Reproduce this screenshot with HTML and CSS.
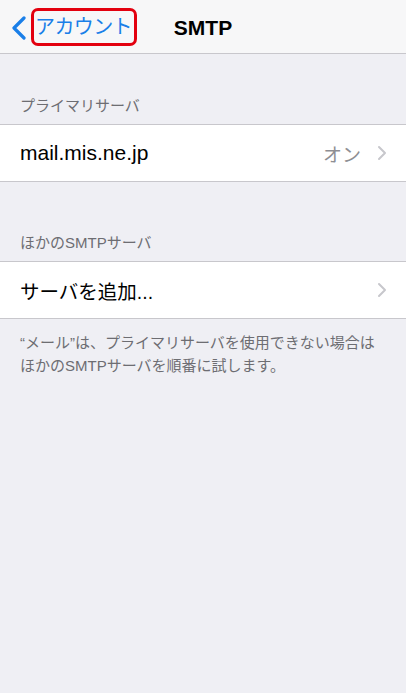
FILE: index.html
```html
<!DOCTYPE html>
<html lang="ja">

    <head>
        <meta charset="UTF-8">
        <meta name="viewport" content="width=device-width, initial-scale=1.0">
        <title>SMTP</title>

        <link rel="stylesheet" href="styles.css">
    </head>

    <body>
        <header class="navbar">
            <a class="back" href="#">
                <svg class="back-icon" width="16" height="24" viewBox="0 0 16 24">
                    <polyline points="13,2 3,12 13,22" fill="none" stroke="#1a7fe8" stroke-width="3.2" stroke-linecap="round" stroke-linejoin="round" />
                </svg>
                <span class="back-label">アカウント</span>
            </a>
            <h1 class="title">SMTP</h1>
            <span></span>
        </header>

        <div class="section-header first">プライマリサーバ</div>
        <div class="cell">
            <span class="cell-label">mail.mis.ne.jp</span>
            <span class="cell-value">オン</span>
            <svg class="chevron" width="10" height="16" viewBox="0 0 10 16">
                <polyline points="2,2 8,8 2,14" fill="none" stroke="#c7c7cc" stroke-width="2" stroke-linecap="round" stroke-linejoin="round" />
            </svg>
        </div>

        <div class="section-header">ほかのSMTPサーバ</div>
        <div class="cell">
            <span class="cell-label ja">サーバを追加...</span>
            <svg class="chevron" width="10" height="16" viewBox="0 0 10 16">
                <polyline points="2,2 8,8 2,14" fill="none" stroke="#c7c7cc" stroke-width="2" stroke-linecap="round" stroke-linejoin="round" />
            </svg>
        </div>
        <p class="section-footer">“メール”は、プライマリサーバを使用できない場合は<br>ほかのSMTPサーバを順番に試します。</p>
    </body>

</html>
```

FILE: styles.css
```css
body {
    margin: 0;
    font-family: "Liberation Sans", "Noto Sans CJK JP", sans-serif;
    background-color: #efeff4;
    color: #000;
}

.navbar {
    height: 53px;
    border-bottom: 1px solid #c8c7cc;
    background-color: #f7f7f8;
    display: grid;
    grid-template-columns: 1fr auto 1fr;
    align-items: center;
}

.back {
    display: flex;
    align-items: center;
    padding-left: 11px;
    color: #1a7fe8;
    text-decoration: none;
}

.back-icon {
    margin-top: 2px;
}

.back-label {
    margin-left: 4px;
    padding: 0 2px 0 1px;
    height: 32px;
    line-height: 32px;
    border: 3px solid #e3000f;
    border-radius: 7px;
    font-size: 20px;
    letter-spacing: -0.6px;
}

.title {
    margin: 2px 0 0;
    font-size: 21px;
    font-weight: bold;
}

.section-header {
    padding: 51px 20px 8px;
    line-height: 20px;
    font-size: 15px;
    color: #6d6d72;
}

.section-header.first {
    padding-top: 42px;
}

.cell {
    height: 56px;
    padding: 0 19px 0 20px;
    border-top: 1px solid #c8c7cc;
    border-bottom: 1px solid #c8c7cc;
    background-color: #fff;
    display: flex;
    align-items: center;
}

.cell-label {
    flex: 1;
    font-size: 21px;
}

.cell-label.ja {
    font-size: 19.5px;
}

.cell-value {
    margin-right: 16px;
    font-size: 19px;
    color: #8e8e93;
}

.section-footer {
    margin: 0;
    padding: 12px 20px;
    line-height: 23px;
    font-size: 15px;
    color: #6d6d72;
}
```
